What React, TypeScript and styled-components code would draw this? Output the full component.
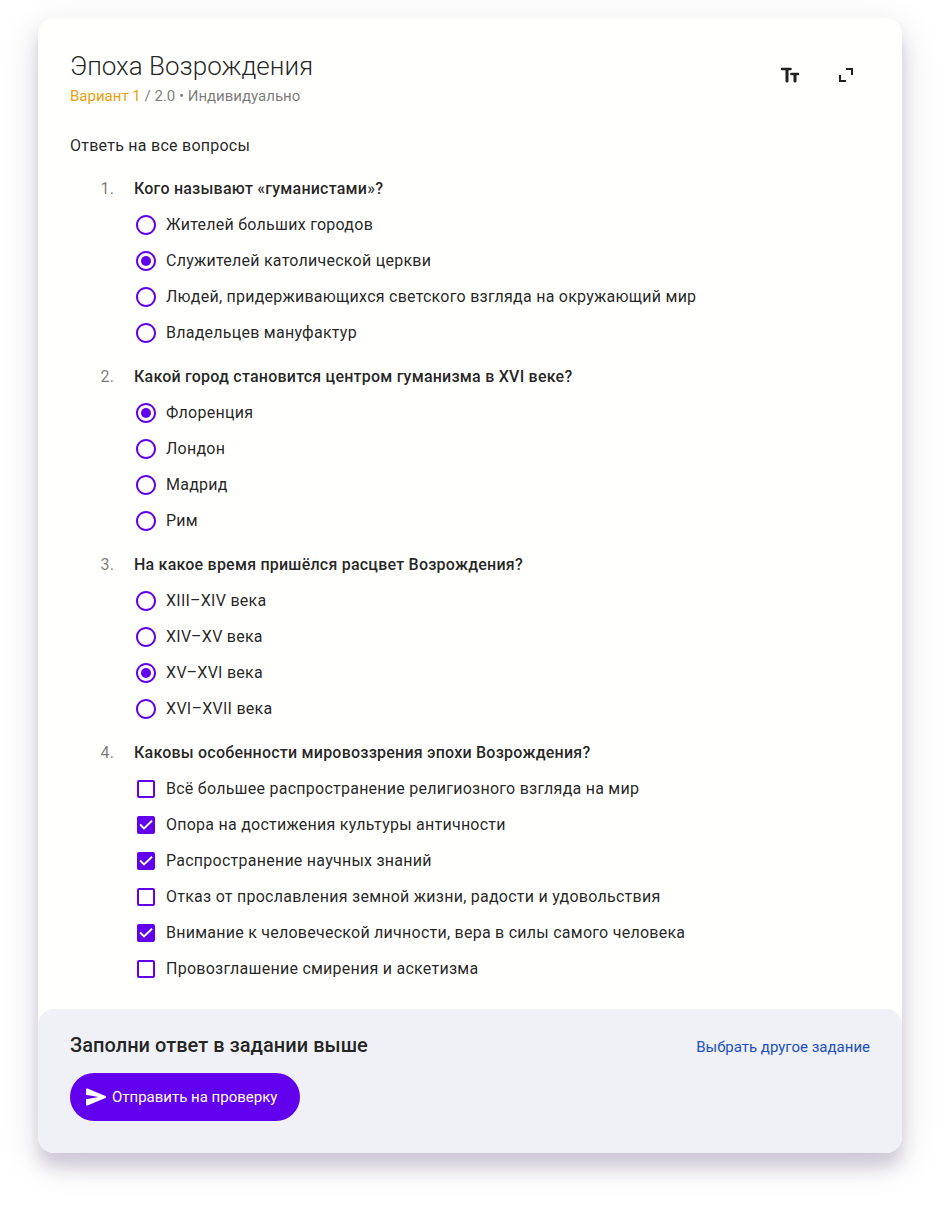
import React from "react";
import styled, { createGlobalStyle } from "styled-components";

const Global = createGlobalStyle`
  * { box-sizing: border-box; }
  body { margin: 0; background: #fff; font-family: Roboto, "Noto Sans", sans-serif; color: rgba(0,0,0,.87); }
`;
const Page = styled.main`
  width: 940px; height: 1210px; padding: 18px 38px 57px; overflow: hidden;
`;
const Card = styled.section`
  height: 1135px; border-radius: 16px; background: #fffffd; display: flex; flex-direction: column;
  box-shadow: 0 14px 16px rgba(60,35,90,.18), 0 10px 40px rgba(35,30,65,.12);
`;
const Content = styled.div` flex: 1; padding: 32px 32px 0; `;
const Header = styled.header` display: flex; justify-content: space-between; height: 76px; `;
const Title = styled.h1` margin: 0; font-size: 26px; line-height: 32px; font-weight: 300; `;
const Meta = styled.p` margin: 2px 0 0; font-size: 15px; line-height: 24px; color: rgba(0,0,0,.54); `;
const Variant = styled.span` color: #e8a010; `;
const Tools = styled.div` display: flex; gap: 32px; padding: 13px 12px 0 0; `;
const Tool = styled.button`
  width: 24px; height: 24px; padding: 0; border: 0; background: none; display: block;
  svg { display: block; }
`;
const Intro = styled.p` margin: 8px 0 0; font-size: 16px; line-height: 24px; letter-spacing: .25px; `;
const Questions = styled.ol` list-style: none; margin: 13px 0 0; padding: 0 0 0 30px; `;
const Question = styled.li` margin-bottom: 8px; `;
const Heading = styled.div` display: flex; height: 36px; font-size: 16px; line-height: 36px; letter-spacing: .22px; `;
const Num = styled.span` width: 34px; padding-left: .5px; color: rgba(0,0,0,.54); letter-spacing: .25px; `;
const Prompt = styled.strong` font-weight: 500; `;
const Option = styled.label`
  display: flex; align-items: center; height: 36px; padding-left: 34px; gap: 8px;
  font-size: 16px; letter-spacing: .25px; white-space: nowrap;
`;
const OptionText = styled.span` line-height: 20px; `;
const Mark = styled.svg` width: 24px; height: 24px; flex: none; fill: #6200ee; `;
const Footer = styled.footer`
  height: 144px; border-radius: 16px; background: #f0f1f6; padding: 24px 32px;
`;
const FooterTop = styled.div` display: flex; justify-content: space-between; height: 40px; `;
const FooterTitle = styled.h2` margin: 0; font-size: 20px; line-height: 24px; font-weight: 500; letter-spacing: .03px; `;
const Link = styled.a` font-size: 15px; line-height: 28px; color: #1a4fc0; `;
const Submit = styled.button`
  display: flex; align-items: center; gap: 4px; width: 230px; height: 48px; padding: 0 14px; border: 0; border-radius: 24px;
  background: #6200ee; color: #fff; font: 400 15px Roboto, sans-serif; white-space: nowrap;
`;

const RADIO = "M12 2C6.48 2 2 6.48 2 12s4.48 10 10 10 10-4.48 10-10S17.52 2 12 2zm0 18c-4.42 0-8-3.58-8-8s3.58-8 8-8 8 3.58 8 8-3.58 8-8 8z";

type Quiz = { text: string; multi?: boolean; checked: number[]; options: string[] };
const quiz: Quiz[] = [
  { text: "Кого называют «гуманистами»?", checked: [1], options: ["Жителей больших городов", "Служителей католической церкви", "Людей, придерживающихся светского взгляда на окружающий мир", "Владельцев мануфактур"] },
  { text: "Какой город становится центром гуманизма в XVI веке?", checked: [0], options: ["Флоренция", "Лондон", "Мадрид", "Рим"] },
  { text: "На какое время пришёлся расцвет Возрождения?", checked: [2], options: ["XIII–XIV века", "XIV–XV века", "XV–XVI века", "XVI–XVII века"] },
  { text: "Каковы особенности мировоззрения эпохи Возрождения?", multi: true, checked: [1, 2, 4], options: ["Всё большее распространение религиозного взгляда на мир", "Опора на достижения культуры античности", "Распространение научных знаний", "Отказ от прославления земной жизни, радости и удовольствия", "Внимание к человеческой личности, вера в силы самого человека", "Провозглашение смирения и аскетизма"] },
];

function Control({ multi, on }: { multi?: boolean; on: boolean }) {
  if (multi) {
    return (
      <Mark viewBox="0 0 24 24">
        <rect x="4" y="4" width="16" height="16" rx="1" fill={on ? "#6200ee" : "none"} stroke="#6200ee" strokeWidth="2" />
        {on && <path d="M6.1 11.5l3.9 3.9 8-7.6" fill="none" stroke="#fff" strokeWidth="2" />}
      </Mark>
    );
  }
  return (
    <Mark viewBox="0 0 24 24">
      <path d={RADIO} />
      {on && <circle cx="12" cy="12" r="5" />}
    </Mark>
  );
}

export default function App() {
  return (
    <>
      <Global />
      <Page>
        <Card>
          <Content>
            <Header>
              <div>
                <Title>Эпоха Возрождения</Title>
                <Meta><Variant>Вариант 1</Variant> / 2.0 • Индивидуально</Meta>
              </div>
              <Tools>
                <Tool aria-label="Размер текста">
                  <svg width="24" height="24" viewBox="0 0 24 24" fill="none" stroke="#212121" strokeWidth="3" strokeLinecap="round">
                    <path d="M4 6h8.5M13.5 11H20" strokeWidth="2.6" />
                    <path d="M9 6.5V18M17 11.5V18" />
                  </svg>
                </Tool>
                <Tool aria-label="Развернуть">
                  <svg width="24" height="24" viewBox="0 0 24 24" fill="none" stroke="#212121" strokeWidth="2"><path d="M12 6h6v6M6 12v6h6" /></svg>
                </Tool>
              </Tools>
            </Header>
            <Intro>Ответь на все вопросы</Intro>
            <Questions>
              {quiz.map((q, i) => (
                <Question key={q.text}>
                  <Heading><Num>{i + 1}.</Num><Prompt>{q.text}</Prompt></Heading>
                  {q.options.map((o, j) => (
                    <Option key={o}><Control multi={q.multi} on={q.checked.includes(j)} /><OptionText>{o}</OptionText></Option>
                  ))}
                </Question>
              ))}
            </Questions>
          </Content>
          <Footer>
            <FooterTop>
              <FooterTitle>Заполни ответ в задании выше</FooterTitle>
              <Link>Выбрать другое задание</Link>
            </FooterTop>
            <Submit>
              <svg width="24" height="24" viewBox="0 0 24 24" fill="#fff">
                <path d="M3.4 3.6L21.4 11.1q1.6.9 0 1.8L3.4 20.4Q2 20.8 2 19.4V14.2L14.5 12 2 9.8V4.6Q2 3.2 3.4 3.6z" />
              </svg>
              Отправить на проверку
            </Submit>
          </Footer>
        </Card>
      </Page>
    </>
  );
}
